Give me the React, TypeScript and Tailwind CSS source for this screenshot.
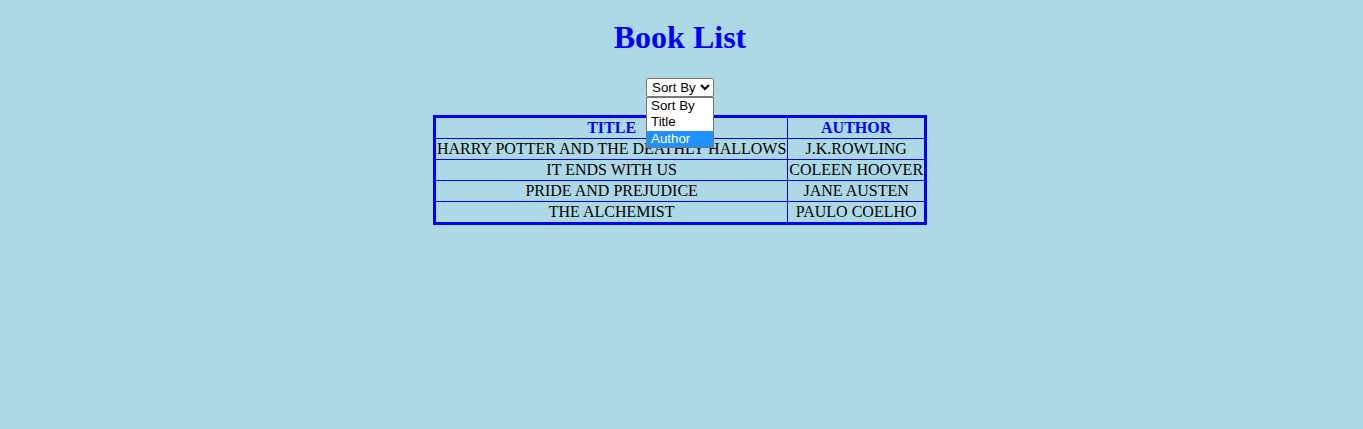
import { useState } from "react"

const books = [
  { title: "HARRY POTTER AND THE DEATHLY HALLOWS", author: "J.K.ROWLING" },
  { title: "IT ENDS WITH US", author: "COLEEN HOOVER" },
  { title: "PRIDE AND PREJUDICE", author: "JANE AUSTEN" },
  { title: "THE ALCHEMIST", author: "PAULO COELHO" },
]

const options = ["Sort By", "Title", "Author"]

export default function App() {
  const [sortBy, setSortBy] = useState("Sort By")

  return (
    <div className="min-h-[429px] pr-[3px] bg-[#add8e6] text-black text-[16px] leading-[normal] font-['Liberation_Serif',serif]">
      <h1 className="pt-[19px] mb-[22px] text-center text-[32px] font-bold text-[#0000ff]">Book List</h1>

      {/* Sort select with open list */}
      <div className="flex justify-center">
        <div className="relative">
          <select
            value={sortBy}
            onChange={(e) => setSortBy(e.target.value)}
            className="h-[19px] w-[68px] bg-white border border-[#767676] rounded-[2px] text-[13.33px] leading-[normal] font-['Liberation_Sans',Arial,sans-serif] pl-[1px]"
          >
            {options.map((o) => (
              <option key={o}>{o}</option>
            ))}
          </select>
          <div className="absolute left-0 top-full z-10 w-[68px] bg-white border border-[#767676] font-['Liberation_Sans',Arial,sans-serif] text-[13.33px] leading-[16.4px]">
            {options.map((o) => (
              <div
                key={o}
                className={`px-[4px] ${o === "Author" ? "bg-[#1e90ff] text-white" : "text-black"}`}
              >
                {o}
              </div>
            ))}
          </div>
        </div>
      </div>

      <table className="mx-auto mt-[18px] border-collapse border-[3px] border-[#0000ff]">
        <thead>
          <tr>
            <th className="border border-[#0000ff] px-[1px] py-[1px] font-bold text-[#0000ff]">TITLE</th>
            <th className="border border-[#0000ff] px-[1px] py-[1px] font-bold text-[#0000ff]">AUTHOR</th>
          </tr>
        </thead>
        <tbody>
          {books.map((b) => (
            <tr key={b.title}>
              <td className="border border-[#0000ff] px-[1px] py-[1px] text-center">{b.title}</td>
              <td className="border border-[#0000ff] px-[1px] py-[1px] text-center">{b.author}</td>
            </tr>
          ))}
        </tbody>
      </table>
    </div>
  )
}
